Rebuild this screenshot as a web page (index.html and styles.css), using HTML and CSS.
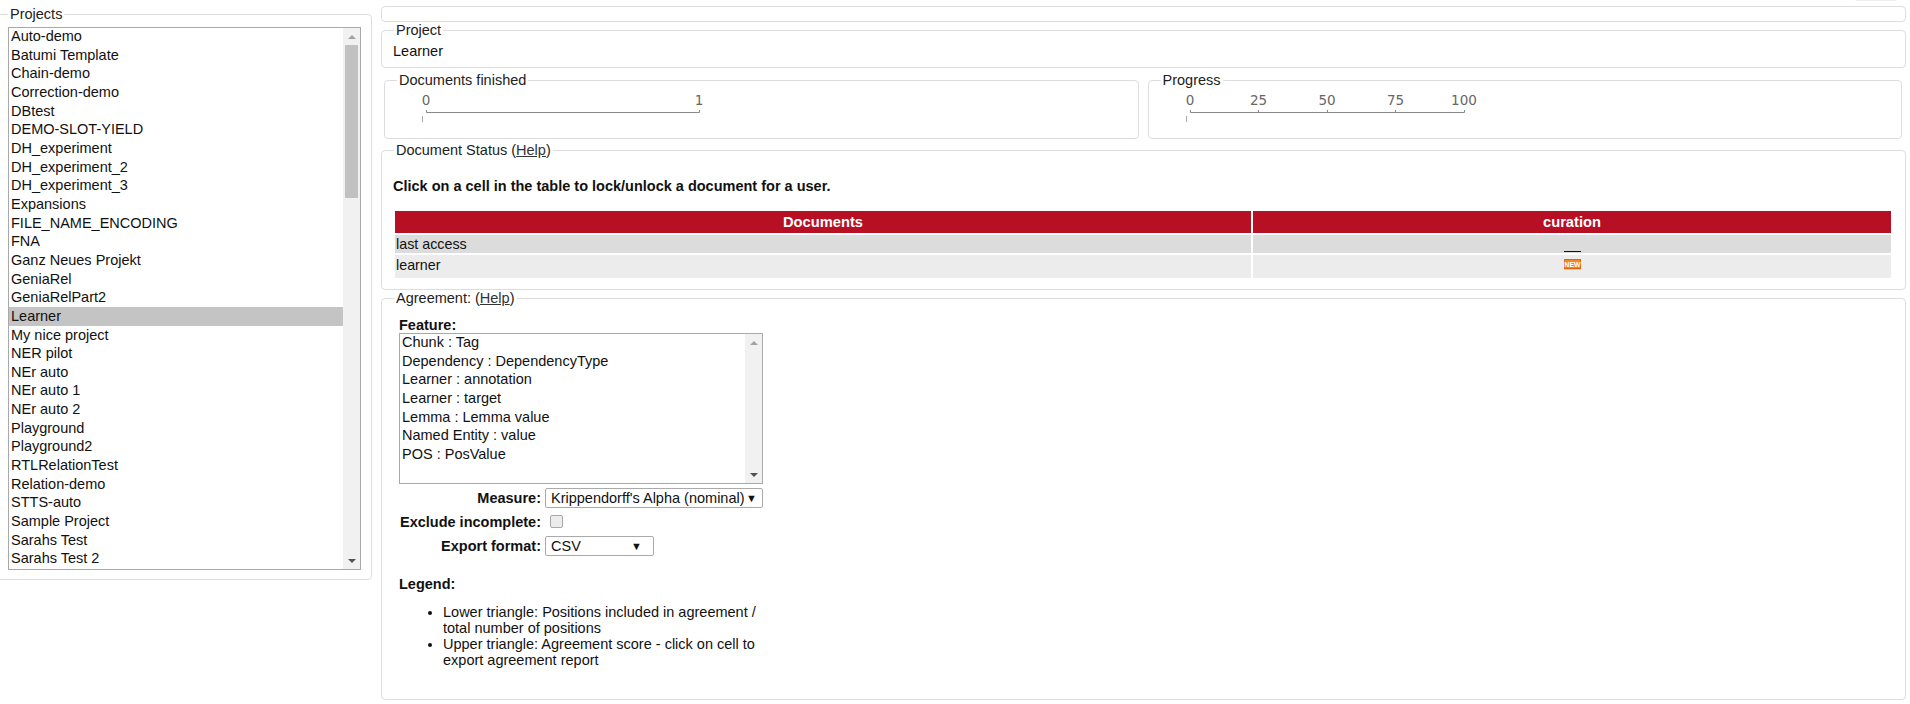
FILE: index.html
```html
<!DOCTYPE html>
<html lang="en">
<head>
  <meta charset="UTF-8" />
  <title>Monitoring</title>
  <link rel="stylesheet" href="styles.css">
</head>
<body>
  <div class="corner-shadow"></div>
  <div class="page">

    <!-- PROJECT LIST -->
    <fieldset class="box projects">
      <legend>Projects</legend>
      <div class="listbox project-list">
        <ul class="list-items">
          <li>Auto-demo</li>
          <li>Batumi Template</li>
          <li>Chain-demo</li>
          <li>Correction-demo</li>
          <li>DBtest</li>
          <li>DEMO-SLOT-YIELD</li>
          <li>DH_experiment</li>
          <li>DH_experiment_2</li>
          <li>DH_experiment_3</li>
          <li>Expansions</li>
          <li>FILE_NAME_ENCODING</li>
          <li>FNA</li>
          <li>Ganz Neues Projekt</li>
          <li>GeniaRel</li>
          <li>GeniaRelPart2</li>
          <li class="selected">Learner</li>
          <li>My nice project</li>
          <li>NER pilot</li>
          <li>NEr auto</li>
          <li>NEr auto 1</li>
          <li>NEr auto 2</li>
          <li>Playground</li>
          <li>Playground2</li>
          <li>RTLRelationTest</li>
          <li>Relation-demo</li>
          <li>STTS-auto</li>
          <li>Sample Project</li>
          <li>Sarahs Test</li>
          <li>Sarahs Test 2</li>
        </ul>
        <div class="scrollbar">
          <span class="arrow-up"></span>
          <div class="track"><div class="thumb"></div></div>
          <span class="arrow-down"></span>
        </div>
      </div>
    </fieldset>

    <div class="main">
      <div class="empty-box"></div>

      <fieldset class="box project-box">
        <legend>Project</legend>
        Learner
      </fieldset>

      <!-- CHARTS -->
      <div class="charts">
        <fieldset class="box chart-box">
          <legend>Documents finished</legend>
          <svg class="ruler" width="330" height="40">
            <text x="30" y="16" text-anchor="middle">0</text>
            <text x="303" y="16" text-anchor="middle">1</text>
            <path d="M30.5 21v2.5h273V21" />
            <path class="stub" d="M26.5 27v6" />
          </svg>
        </fieldset>
        <fieldset class="box chart-box">
          <legend>Progress</legend>
          <svg class="ruler" width="330" height="40">
            <text x="30" y="16" text-anchor="middle">0</text>
            <text x="98.5" y="16" text-anchor="middle">25</text>
            <text x="167" y="16" text-anchor="middle">50</text>
            <text x="235.5" y="16" text-anchor="middle">75</text>
            <text x="304" y="16" text-anchor="middle">100</text>
            <path d="M30.5 21v2.5h274V21M98.5 21v2M167.5 21v2M235.5 21v2" />
            <path class="stub" d="M26.5 27v6" />
          </svg>
        </fieldset>
      </div>

      <!-- DOCUMENT STATUS -->
      <fieldset class="box status-box">
        <legend>Document Status (<a href="#">Help</a>)</legend>
        <p class="hint">Click on a cell in the table to lock/unlock a document for a user.</p>
        <table class="status-table">
          <tr>
            <th class="col-doc">Documents</th>
            <th>curation</th>
          </tr>
          <tr class="row-dark">
            <td>last access</td>
            <td class="cell-mark"><span class="dash"></span></td>
          </tr>
          <tr class="row-light">
            <td>learner</td>
            <td class="cell-mark">
              <svg class="new-icon" width="17" height="11">
                <rect x="0.5" y="0.5" width="16" height="9" fill="#f5871f" stroke="#d9690e" />
                <rect x="0" y="10" width="17" height="1" fill="#c9c9c9" />
                <text x="8.5" y="8" text-anchor="middle">NEW</text>
              </svg>
            </td>
          </tr>
        </table>
      </fieldset>

      <!-- AGREEMENT -->
      <fieldset class="box agreement-box">
        <legend>Agreement: (<a href="#">Help</a>)</legend>
        <div class="agreement-form">
          <div class="field-title">Feature:</div>
          <div class="listbox feature-list">
            <ul class="list-items">
              <li>Chunk : Tag</li>
              <li>Dependency : DependencyType</li>
              <li>Learner : annotation</li>
              <li>Learner : target</li>
              <li>Lemma : Lemma value</li>
              <li>Named Entity : value</li>
              <li>POS : PosValue</li>
            </ul>
            <div class="scrollbar">
              <span class="arrow-up"></span>
              <div class="track"></div>
              <span class="arrow-down"></span>
            </div>
          </div>
          <div class="form-grid">
            <label>Measure:</label>
            <div class="dropdown measure"><span>Krippendorff's Alpha (nominal)</span><i>▼</i></div>
            <label>Exclude incomplete:</label>
            <div class="check-cell"><input type="checkbox" class="check"></div>
            <label>Export format:</label>
            <div class="dropdown export"><span>CSV</span><i>▼</i></div>
          </div>
          <div class="legend-title">Legend:</div>
          <ul class="legend-list">
            <li>Lower triangle: Positions included in agreement / total number of positions</li>
            <li>Upper triangle: Agreement score - click on cell to export agreement report</li>
          </ul>
        </div>
      </fieldset>
    </div>
  </div>
</body>
</html>
```

FILE: styles.css
```css
html, body {
  margin: 0;
  background-color: #fff;
}
body {
  color: #111;
  font-family: "Liberation Sans", Arial, sans-serif;
  font-size: 14.5px;
  line-height: 16px;
  height: 704px;
  overflow: hidden;
}
.page {
  display: grid;
  grid-template-columns: 382px 1fr;
  column-gap: 9px;
  margin-left: -10px;
  padding-right: 4px;
  padding-top: 6px;
}
.corner-shadow {
  position: absolute;
  top: -3px;
  right: 12px;
  width: 44px;
  height: 4px;
  border-radius: 0 0 20px 20px;
  background-color: #eee;
}
.box {
  margin: 0;
  min-width: 0;
  border: 1px solid #ddd;
  border-radius: 4px;
  padding: 0;
}
.box legend {
  padding: 0 2px;
  color: #222;
}
.box a {
  color: #333;
}

/* left side */
.projects {
  padding: 5px 10px 9px 0;
  align-self: start;
}
.projects legend {
  margin-left: 17px;
}
.listbox {
  display: flex;
  border: 1px solid #a9a9a9;
  background-color: #fff;
  overflow: hidden;
}
.project-list {
  height: 543px;
  box-sizing: border-box;
  margin-left: 17px;
}
.list-items {
  list-style: none;
  margin: -1px 0 0 0;
  padding: 0;
  flex: 1;
}
.list-items li {
  height: 18.67px;
  line-height: 18.67px;
  padding-left: 2px;
  white-space: nowrap;
}
.list-items li.selected {
  background-color: #c4c4c4;
}
.scrollbar {
  display: flex;
  flex-direction: column;
  align-items: center;
  width: 17px;
  background-color: #f1f1f1;
}
.track {
  flex: 1;
  width: 100%;
  padding: 0 2px;
  box-sizing: border-box;
}
.thumb {
  height: 153px;
  background-color: #c1c1c1;
}
.arrow-up, .arrow-down {
  display: block;
  width: 0;
  height: 0;
  margin: 7px 0 6px;
  border-left: 4px solid transparent;
  border-right: 4px solid transparent;
}
.arrow-up {
  border-bottom: 4px solid #a3a3a3;
}
.arrow-down {
  border-top: 4px solid #505050;
}

/* right side */
.empty-box {
  height: 14px;
  border: 1px solid #ddd;
  border-radius: 4px;
}
.project-box {
  padding: 5px 8px 8px 11px;
}
.project-box legend {
  margin-left: 1px;
}
.charts {
  display: flex;
  gap: 9px;
  margin: 4px 4px 0 3px;
}
.chart-box {
  flex: 1;
  height: 67px;
  box-sizing: border-box;
}
.chart-box legend {
  margin-left: 12px;
}
.ruler {
  display: block;
  margin: 1px 0 0 11px;
}
.ruler text {
  font-family: "DejaVu Sans", sans-serif;
  font-size: 13.5px;
  fill: #666;
}
.ruler path {
  fill: none;
  stroke: #888;
  stroke-width: 1;
}
.ruler .stub {
  stroke: #aaa;
}
.status-box {
  margin-top: 3px;
  padding: 0 11px 9px 11px;
}
.status-box legend {
  margin-left: 1px;
}
.hint {
  font-weight: bold;
  margin: 20px 0 15px 0;
}
.status-table {
  width: 1500px;
  border-collapse: separate;
  border-spacing: 2px;
  table-layout: fixed;
}
.status-table th {
  background-color: #b70f23;
  color: #fff;
  font-size: 14.7px;
  height: 22px;
  padding: 0;
}
.col-doc {
  width: 856px;
}
.status-table td {
  padding: 0 1px;
  font-size: 14.3px;
}
.row-dark td {
  background-color: #dcdcdc;
  height: 18px;
}
.row-light td {
  background-color: #ececec;
  height: 23px;
  vertical-align: top;
}
.row-light td:first-child {
  padding-top: 2px;
  height: 21px;
}
.cell-mark {
  text-align: center;
}
.row-dark .cell-mark {
  vertical-align: top;
}
.dash {
  display: block;
  width: 17px;
  height: 1px;
  background-color: #111;
  margin: 16px auto 0;
}
.new-icon {
  display: block;
  margin: 4px auto 0;
}
.new-icon text {
  font-family: "Liberation Sans", sans-serif;
  font-size: 7px;
  font-weight: bold;
  fill: #fff;
}
.agreement-box {
  height: 410px;
  box-sizing: border-box;
}
.agreement-box legend {
  margin-left: 12px;
}
.agreement-form {
  width: 364px;
  margin-left: 17px;
}
.field-title, .form-grid label, .legend-title {
  font-weight: bold;
}
.field-title {
  margin-top: 11px;
}
.feature-list {
  height: 151px;
  box-sizing: border-box;
}
.form-grid {
  display: grid;
  grid-template-columns: 142px 1fr;
  column-gap: 4px;
  row-gap: 6px;
  align-items: center;
  margin-top: 4px;
}
.form-grid label {
  text-align: right;
}
.dropdown {
  display: flex;
  justify-content: space-between;
  align-items: center;
  box-sizing: border-box;
  height: 20px;
  padding: 0 5px;
  border: 1px solid #aaa;
  border-radius: 2px;
  background-color: #fff;
}
.dropdown i {
  font-style: normal;
  font-size: 11px;
}
.export {
  width: 109px;
  padding-right: 11px;
}
.check-cell {
  height: 16px;
}
.check {
  appearance: none;
  display: block;
  width: 13px;
  height: 13px;
  margin: 1px 0 0 5px;
  border: 1px solid #a9a9a9;
  border-radius: 2px;
  background-color: #ececec;
}
.legend-title {
  margin-top: 20px;
}
.legend-list {
  margin: 12px 0 0 0;
  padding-left: 44px;
}
```
